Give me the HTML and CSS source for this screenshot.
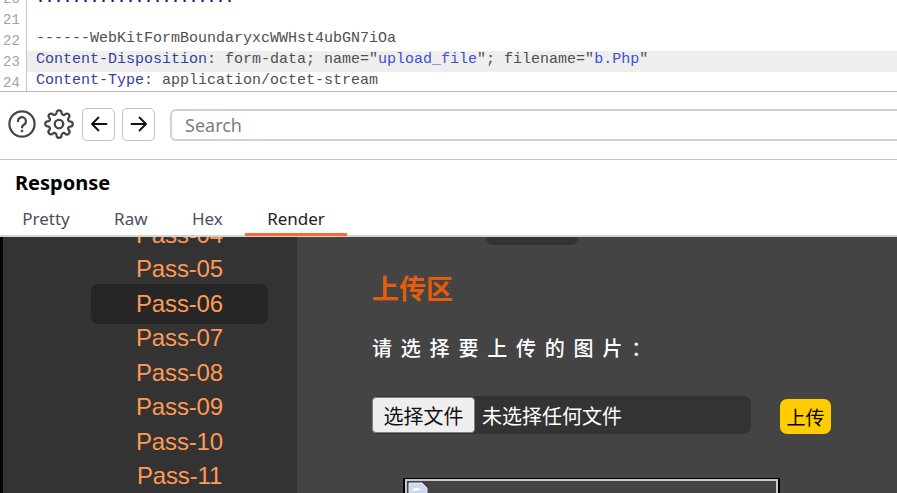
FILE: index.html
```html
<!DOCTYPE html>
<html lang="zh">
<head>
<meta charset="utf-8">
<title>Response render</title>
<link rel="stylesheet" href="styles.css">
</head>
<body>
<section class="editor">
  <div class="editor-inner">
    <div class="line"><span class="num">20</span><span class="code dots">......................</span></div>
    <div class="line"><span class="num">21</span><span class="code"></span></div>
    <div class="line"><span class="num">22</span><span class="code">------WebKitFormBoundaryxcWWHst4ubGN7iOa</span></div>
    <div class="line current"><span class="num">23</span><span class="code"><span class="key">Content-Disposition</span>: form-data; name="<span class="val">upload_file</span>"; filename="<span class="val">b.Php</span>"</span></div>
    <div class="line"><span class="num">24</span><span class="code"><span class="key">Content-Type</span>: application/octet-stream</span></div>
  </div>
</section>
<section class="toolbar">
  <svg class="tool-icon" width="28" height="28" viewBox="0 0 28 28" fill="none" stroke="#444" stroke-width="2.2" stroke-linecap="round"><circle cx="14" cy="14" r="12.6"/><path d="M10 11.2a4 4 0 1 1 6.2 3.3c-1.4.9-2.2 1.6-2.2 3"/><circle cx="14" cy="21" r=".6" fill="#444" stroke-width="1.4"/></svg>
  <svg class="tool-icon gear" width="30" height="30" viewBox="0 0 24 24" fill="none" stroke="#444" stroke-width="1.8" stroke-linejoin="round"><circle cx="12" cy="12" r="3.4"/><path d="M19.4 15a1.7 1.7 0 0 0 .34 1.87l.06.06a2 2 0 1 1-2.83 2.83l-.06-.06a1.7 1.7 0 0 0-2.88 1.2V21a2 2 0 1 1-4 0v-.09A1.7 1.7 0 0 0 7.1 19.7l-.06.06a2 2 0 1 1-2.83-2.83l.06-.06a1.7 1.7 0 0 0-1.2-2.88H3a2 2 0 1 1 0-4h.09A1.7 1.7 0 0 0 4.3 7.1l-.06-.06a2 2 0 1 1 2.83-2.83l.06.06a1.7 1.7 0 0 0 1.87.34H9a1.7 1.7 0 0 0 1-1.54V3a2 2 0 1 1 4 0v.09a1.7 1.7 0 0 0 2.88 1.2l.06-.06a2 2 0 1 1 2.83 2.83l-.06.06a1.7 1.7 0 0 0-.34 1.87V9a1.7 1.7 0 0 0 1.54 1H21a2 2 0 1 1 0 4h-.09a1.7 1.7 0 0 0-1.51 1z"/></svg>
  <button class="nav-btn" type="button"><svg width="18" height="18" viewBox="0 0 18 18" fill="none" stroke="#111" stroke-width="1.8" stroke-linecap="round" stroke-linejoin="round"><path d="M16.5 9H2M8.5 2.5 2 9l6.500 6.500"/></svg></button>
  <button class="nav-btn" type="button"><svg width="18" height="18" viewBox="0 0 18 18" fill="none" stroke="#111" stroke-width="1.8" stroke-linecap="round" stroke-linejoin="round"><path d="M1.500 9H16M9.500 2.500 16 9l-6.500 6.500"/></svg></button>
  <div class="search">Search</div>
</section>
<section class="response">
  <h2 class="response-title">Response</h2>
  <nav class="tabs">
    <span class="tab">Pretty</span>
    <span class="tab">Raw</span>
    <span class="tab">Hex</span>
    <span class="tab active">Render</span>
  </nav>
</section>
<section class="render">
  <aside class="sidebar">
    <ul class="pass-list">
      <li class="pass">Pass-04</li>
      <li class="pass">Pass-05</li>
      <li class="pass selected">Pass-06</li>
      <li class="pass">Pass-07</li>
      <li class="pass">Pass-08</li>
      <li class="pass">Pass-09</li>
      <li class="pass">Pass-10</li>
      <li class="pass">Pass-11</li>
    </ul>
  </aside>
  <main class="content">
    <div class="notch"></div>
    <h3 class="upload-title">上传区</h3>
    <p class="prompt">请选择要上传的图片：</p>
    <div class="form-row">
      <div class="file-field"><button class="file-btn" type="button">选择文件</button><span class="file-name">未选择任何文件</span></div>
      <button class="submit" type="button">上传</button>
    </div>
    <div class="preview">
      <div class="preview-inner">
        <svg width="24" height="16" viewBox="0 0 24 16"><path d="M1 1h13l5 5v12H1z" fill="#cdd9f2" stroke="#e8e8e8"/><path d="M4 9c2-4 6-4 9-1" fill="#fff"/></svg>
      </div>
    </div>
  </main>
</section>
</body>
</html>
```
FILE: styles.css
```css
* { box-sizing: border-box; }
html, body { margin: 0; padding: 0; }
body {
  width: 897px;
  height: 493px;
  overflow: hidden;
  background: #fff;
  font-family: "Noto Sans", sans-serif;
}

/* Code editor */
.editor {
  height: 92px;
  overflow: hidden;
  border-bottom: 1px solid #b9b9b9;
}
.editor-inner { margin-top: -12px; }
.line {
  display: flex;
  height: 21px;
  line-height: 17px;
  font-family: "Liberation Mono", monospace;
  font-size: 15px;
  color: #505050;
  white-space: pre;
}
.num {
  flex: none;
  width: 27px;
  padding: 3px 0 0 3px;
  font-size: 14px;
  color: #a2a2a2;
  border-right: 1px solid #c8c8c8;
}
.code { flex: 1; padding-left: 9px; }
.current .code { background: #eeeeee; }
.key { color: #34409e; }
.val { color: #3f4fd6; }
.dots { padding-top: 2px; color: #14208f; font-weight: 700; }

/* Toolbar */
.toolbar {
  display: flex;
  align-items: center;
  height: 68px;
  padding: 0 0 3px 8px;
  border-bottom: 1px solid #c4c4c4;
}
.tool-icon { flex: none; }
.gear { margin-left: 8px; margin-right: 8px; }
.nav-btn {
  display: flex;
  align-items: center;
  justify-content: center;
  flex: none;
  width: 33px;
  height: 33px;
  margin-right: 7px;
  padding: 0;
  background: #fff;
  border: 1.5px solid #c3bfbf;
  border-radius: 5px;
}
.search {
  flex: none;
  width: 760px;
  height: 32px;
  margin-left: 8px;
  margin-top: 1px;
  padding-left: 13px;
  font-size: 18px;
  line-height: 29px;
  color: #7d7d7d;
  border: 2px solid #d2d2d2;
  border-right: 0;
  border-radius: 6px 0 0 6px;
}

/* Response header */
.response { height: 77px; }
.response-title {
  margin: 0;
  padding: 9px 0 0 15px;
  height: 50px;
  font-size: 20px;
  line-height: 27px;
  font-weight: 700;
  color: #000;
}
.tabs {
  display: flex;
  height: 27px;
  border-bottom: 2px solid #d4d4d4;
}
.tab {
  padding: 0 22.200px;
  font-size: 17px;
  line-height: 17px;
  color: #4a5060;
}
.tab.active {
  color: #222;
  border-bottom: 3px solid #ff6633;
  height: 26px;
}

/* Rendered page */
.render {
  display: flex;
  height: 256px;
  overflow: hidden;
  background: #444;
  border-left: 3px solid #000;
  font-family: "Liberation Sans", "Noto Sans CJK SC", sans-serif;
}
.sidebar {
  flex: none;
  width: 294px;
  background: #333;
}
.pass-list {
  margin: -19.500px 0 0;
  padding: 0 29px 0 88px;
  list-style: none;
}
.pass {
  height: 34.500px;
  line-height: 34.500px;
  font-size: 24px;
  letter-spacing: -0.150px;
  text-align: center;
  color: #ff9955;
}
.pass.selected {
  height: 40px;
  line-height: 40px;
  margin: -3px 0 -2.500px;
  background: #262626;
  border-radius: 7px;
}
.content {
  flex: 1;
  min-width: 0;
  padding-left: 75px;
}
.notch {
  width: 92px;
  height: 8px;
  margin-left: 114px;
  background: #333;
  border-radius: 0 0 7px 7px;
}
.upload-title {
  margin: 29px 0 0;
  font-size: 27px;
  line-height: 32px;
  font-weight: 700;
  color: #e35d0d;
}
.prompt {
  margin: 29px 0 0;
  font-size: 20px;
  line-height: 28px;
  letter-spacing: 8.800px;
  color: #fff;
  font-weight: 500;
}
.form-row {
  display: flex;
  align-items: center;
  margin-top: 33px;
}
.file-field {
  display: flex;
  align-items: center;
  width: 379px;
  height: 38px;
  background: #333;
  border-radius: 8px;
}
.file-btn {
  flex: none;
  width: 103px;
  height: 36px;
  padding: 0;
  font: inherit;
  font-size: 20px;
  color: #111;
  background: #efefef;
  border: 1.500px solid #808080;
  border-radius: 4px;
}
.file-name {
  margin-left: 7px;
  font-size: 20px;
  color: #fff;
}
.submit {
  width: 51px;
  height: 35px;
  margin-left: 29px;
  margin-top: 2px;
  padding: 0;
  font: inherit;
  font-size: 19px;
  color: #000;
  background: #ffcc00;
  border: 0;
  border-radius: 7px;
}
.preview {
  width: 377px;
  height: 60px;
  margin: 44px 0 0 31px;
  background: #000;
  padding: 1px 2px 0;
}
.preview-inner {
  height: 100%;
  padding: 1px 0 0 1px;
  background: #444;
  border: 2px solid #c8c8c8;
  border-bottom: 0;
}
.preview-inner svg { display: block; }
```
